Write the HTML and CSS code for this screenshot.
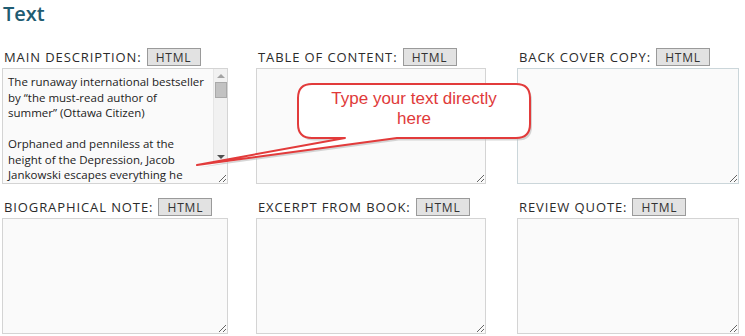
FILE: index.html
```html
<!DOCTYPE html>
<html lang="en">
<head>
  <meta charset="UTF-8">
  <meta name="viewport" content="width=device-width, initial-scale=1.0">
  <title>Text</title>
  <link rel="stylesheet" href="styles.css">
</head>
<body>
  <div class="page">
    <h1 class="title">Text</h1>

    <div class="fields">
      <div class="field">
        <div class="head"><label for="main-description">Main description:</label><button type="button">HTML</button></div>
        <div class="box">
          <textarea id="main-description" class="has-text">The runaway international bestseller
by “the must-read author of
summer” (Ottawa Citizen)

Orphaned and penniless at the
height of the Depression, Jacob
Jankowski escapes everything he
knows by jumping onto a train
that carries the Benzini Brothers
Most Spectacular Show on Earth,
a second-rate travelling circus.</textarea>
          <div class="scrollbar">
            <span class="arrow up"></span>
            <span class="track"><span class="thumb"></span></span>
            <span class="arrow down"></span>
          </div>
        </div>
      </div>
      <div class="field">
        <div class="head"><label for="toc">Table of content:</label><button type="button">HTML</button></div>
        <textarea id="toc"></textarea>
      </div>
      <div class="field">
        <div class="head"><label for="back-cover">Back cover copy:</label><button type="button">HTML</button></div>
        <textarea id="back-cover" class="blue"></textarea>
      </div>
      <div class="field">
        <div class="head"><label for="bio">Biographical note:</label><button type="button">HTML</button></div>
        <textarea id="bio"></textarea>
      </div>
      <div class="field">
        <div class="head"><label for="excerpt">Excerpt from book:</label><button type="button">HTML</button></div>
        <textarea id="excerpt"></textarea>
      </div>
      <div class="field">
        <div class="head"><label for="review">Review quote:</label><button type="button">HTML</button></div>
        <textarea id="review"></textarea>
      </div>
    </div>

    <!-- callout pointing at the first box -->
    <div class="callout">
      <svg width="350" height="96" viewBox="0 0 350 96">
        <path class="shadow" d="M122 6 H326 Q340 6 340 20 V46 Q340 60 326 60 H207 L7 87 L155 60 H122 Q108 60 108 46 V20 Q108 6 122 6 Z" transform="translate(2 2.5)"/>
        <path class="shape" d="M122 6 H326 Q340 6 340 20 V46 Q340 60 326 60 H207 L7 87 L155 60 H122 Q108 60 108 46 V20 Q108 6 122 6 Z"/>
      </svg>
      <div class="callout-text">Type your text directly<br>here</div>
    </div>
  </div>
</body>
</html>
```

FILE: styles.css
```css
body {
  margin: 0;
  background: #fff;
  font-family: "Open Sans", Arial, sans-serif;
  color: #333;
}

.page {
  position: relative;
  width: 745px;
  height: 336px;
  overflow: hidden;
}

.title {
  margin: 0 0 0 3px;
  font-size: 20px;
  line-height: 28px;
  font-weight: 600;
  color: #1f5c72;
}

.fields {
  display: grid;
  grid-template-columns: 226px 230px 225px;
  column-gap: 28px;
  row-gap: 13px;
  margin-top: 19px;
  padding-left: 2px;
}

.field:nth-child(3n) {
  padding-left: 3px;
}

.head {
  display: flex;
  align-items: center;
  gap: 5px;
  height: 19px;
  margin-bottom: 2px;
  padding-left: 2px;
}

label {
  font-size: 13px;
  letter-spacing: 0.9px;
  text-transform: uppercase;
  color: #2b2b2b;
}

button {
  width: 54px;
  height: 18px;
  padding: 0;
  background: #e2e2e2;
  border: 1px solid #9a9a9a;
  border-radius: 0;
  font-family: "Open Sans", Arial, sans-serif;
  font-size: 12px;
  letter-spacing: 0.8px;
  color: #333;
}

textarea {
  display: block;
  box-sizing: border-box;
  width: 100%;
  height: 116px;
  margin: 0;
  padding: 5px 4px 4px 5px;
  background: #fafafa;
  border: 1px solid #d4d4d4;
  font-family: "Open Sans", Arial, sans-serif;
  font-size: 11.5px;
  line-height: 15.5px;
  color: #222;
  resize: both;
}

.box {
  position: relative;
}

.has-text {
  overflow: hidden;
  padding-right: 18px;
}

/* drawn scrollbar, the headless browser hides the real one */
.scrollbar {
  position: absolute;
  top: 1px;
  right: 1px;
  width: 13px;
  height: 94px;
  display: flex;
  flex-direction: column;
  background: #f1f1f1;
  border-left: 1px solid #e6e6e6;
}

.arrow {
  height: 13px;
  display: flex;
  align-items: center;
  justify-content: center;
}

.arrow::before {
  content: "";
  border-left: 4px solid transparent;
  border-right: 4px solid transparent;
}

.up::before {
  border-bottom: 4px solid #a3a3a3;
}

.down::before {
  border-top: 4px solid #505050;
}

.track {
  flex: 1;
  padding-left: 1px;
}

.thumb {
  display: block;
  width: 10px;
  height: 14px;
  background: #c2c2c2;
  border: 1px solid #a9a9a9;
}

.blue {
  border-color: #cbd6da;
}

.callout {
  position: absolute;
  left: 190px;
  top: 78px;
  width: 350px;
  height: 96px;
}

.callout svg {
  display: block;
}

.shape {
  fill: #fff;
  stroke: #e23b3b;
  stroke-width: 2;
  stroke-linejoin: round;
}

.shadow {
  fill: #bbb;
  opacity: 0.6;
}

.callout-text {
  position: absolute;
  left: 108px;
  top: 11px;
  width: 232px;
  text-align: center;
  font-family: "Liberation Sans", Arial, sans-serif;
  font-size: 17px;
  line-height: 20px;
  color: #e03a3a;
}
```
